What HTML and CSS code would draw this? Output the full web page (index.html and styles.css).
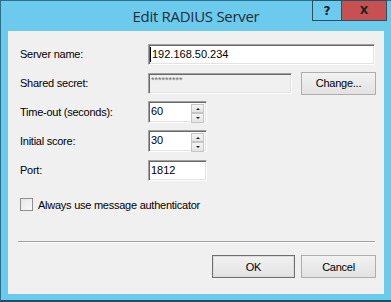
FILE: index.html
```html
<!DOCTYPE html>
<html lang="en">
<head>
    <meta charset="UTF-8">
    <title>Edit RADIUS Server</title>
    <link rel="stylesheet" href="styles.css">
</head>
<body>
    <div class="window">
        <div class="titlebar">
            <div></div>
            <div class="title">Edit RADIUS Server</div>
            <div class="caption-buttons">
                <div class="cap help">?</div>
                <div class="cap close">X</div>
            </div>
        </div>

        <div class="client">
            <div class="fields">
                <div class="label">Server name:</div>
                <div class="control">
                    <div class="edit wide"><span class="caret"></span>192.168.50.234</div>
                </div>

                <div class="label">Shared secret:</div>
                <div class="control">
                    <div class="edit secret disabled">*********</div>
                    <div class="btn change">Change...</div>
                </div>

                <div class="label">Time-out (seconds):</div>
                <div class="control">
                    <div class="edit spin">
                        <span class="value">60</span>
                        <div class="spinner">
                            <div class="spin-btn"><span class="arrow up"></span></div>
                            <div class="spin-btn"><span class="arrow down"></span></div>
                        </div>
                    </div>
                </div>

                <div class="label">Initial score:</div>
                <div class="control">
                    <div class="edit spin">
                        <span class="value">30</span>
                        <div class="spinner">
                            <div class="spin-btn"><span class="arrow up"></span></div>
                            <div class="spin-btn"><span class="arrow down"></span></div>
                        </div>
                    </div>
                </div>

                <div class="label">Port:</div>
                <div class="control">
                    <div class="edit short">1812</div>
                </div>
            </div>

            <div class="check">
                <span class="box"></span>
                <span>Always use message authenticator</span>
            </div>

            <div class="separator"></div>

            <div class="actions">
                <div class="btn default ok">OK</div>
                <div class="btn cancel">Cancel</div>
            </div>
        </div>
    </div>
</body>
</html>
```

FILE: styles.css
```css
body {
    margin: 0;
    padding: 0;
    font-family: "Liberation Sans", Arial, sans-serif;
    font-size: 11px;
    color: #000;
    background-color: #6ccbec;
}

.window {
    width: 391px;
    height: 302px;
    box-sizing: border-box;
    background-color: #6ccbec;
    border-top: 1px solid #2a6f8e;
    border-left: 1px solid #2a6f8e;
    border-bottom: 2px solid #1f4f66;
    padding: 0 7px 6px 7px;
    display: flex;
    flex-direction: column;
}

/* title bar */
.titlebar {
    height: 30px;
    display: grid;
    grid-template-columns: 1fr auto 1fr;
    align-items: start;
}

.title {
    font-family: "Open Sans", "Noto Sans", sans-serif;
    font-size: 15px;
    color: #1f2d3a;
    line-height: 30px;
    letter-spacing: -0.3px;
}

.caption-buttons {
    justify-self: end;
    display: flex;
    margin-right: -3px;
    margin-top: -1px;
}

.cap {
    height: 21px;
    box-sizing: border-box;
    border: 1px solid #2d4f61;
    font-family: "DejaVu Sans", sans-serif;
    font-weight: bold;
    font-size: 12px;
    color: #16212b;
    display: flex;
    align-items: center;
    justify-content: center;
}

.help {
    width: 29px;
    background-color: #6ccbec;
    border-right: none;
}

.close {
    width: 46px;
    background-color: #c75050;
    font-size: 11px;
}

/* client area */
.client {
    flex: 1;
    background-color: #f0f0f0;
    padding: 12px 8px 0 12px;
    display: flex;
    flex-direction: column;
}

.fields {
    display: grid;
    grid-template-columns: 128px 1fr;
    grid-auto-rows: 22px;
    row-gap: 7px;
    align-items: center;
}

.label,
.check,
.btn {
    letter-spacing: -0.25px;
}

.control {
    display: flex;
    align-items: center;
}

.edit {
    height: 21px;
    box-sizing: border-box;
    background-color: #fff;
    border: 1px solid;
    border-color: #a0a0a0 #fff #fff #a0a0a0;
    box-shadow: inset 1px 1px #696969, inset -1px -1px #e3e3e3;
    padding: 3px 0 0 2px;
    line-height: 13px;
    display: flex;
    align-items: flex-start;
}

.wide {
    width: 227px;
    padding-left: 1px;
}

.caret {
    display: inline-block;
    width: 1px;
    height: 15px;
    margin-top: -1px;
    margin-right: 1px;
    background-color: #000;
}

.secret {
    width: 144px;
    color: #6d6d6d;
    font-size: 9px;
    line-height: 9px;
    padding-top: 2px;
}

.disabled {
    background-color: #f0f0f0;
}

.short {
    width: 59px;
    height: 21px;
}

.spin {
    width: 59px;
    height: 22px;
    justify-content: space-between;
    padding-right: 2px;
}

.spinner {
    display: flex;
    flex-direction: column;
    margin-top: -1px;
}

.spin-btn {
    width: 13px;
    height: 9px;
    box-sizing: border-box;
    border: 1px solid #c6c6c6;
    background: linear-gradient(#f5f5f5, #e4e4e4);
    display: flex;
    align-items: center;
    justify-content: center;
}

.spin-btn + .spin-btn {
    height: 10px;
}

.arrow {
    width: 0;
    height: 0;
    border-left: 2px solid transparent;
    border-right: 2px solid transparent;
}

.arrow.up {
    border-bottom: 2px solid #222;
}

.arrow.down {
    border-top: 2px solid #222;
}

/* buttons */
.btn {
    height: 23px;
    box-sizing: border-box;
    border: 1px solid #adadad;
    background: linear-gradient(#f2f2f2, #e2e2e2);
    display: flex;
    align-items: center;
    justify-content: center;
}

.change {
    width: 75px;
    margin-left: 9px;
}

.default {
    border-color: #707070;
    box-shadow: inset 0 0 0 1px #dcdcdc;
}

.ok {
    width: 83px;
}

.cancel {
    width: 75px;
}

/* checkbox */
.check {
    margin-top: 17px;
    display: flex;
    align-items: center;
    gap: 5px;
}

.box {
    width: 13px;
    height: 13px;
    box-sizing: border-box;
    border: 1px solid #8e8f8f;
    background: linear-gradient(135deg, #e6e6e6, #fafafa);
}

/* bottom */
.separator {
    margin: 30px 1px 0 -2px;
    height: 1px;
    background-color: #a0a0a0;
    border-bottom: 1px solid #fff;
}

.actions {
    margin-top: 12px;
    display: flex;
    justify-content: flex-end;
    gap: 6px;
}
```
